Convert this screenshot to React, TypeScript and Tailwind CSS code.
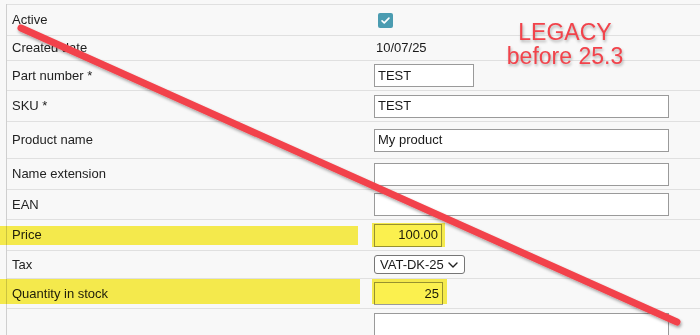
import type { ReactNode } from "react";

type Row = {
  label: string;
  height: string;
  value?: ReactNode;
};

function TextBox({ value = "", width = "w-[295px]", align = "text-left" }: { value?: string; width?: string; align?: string }) {
  return (
    <div
      className={`flex h-[23px] items-center border border-[#9a9a9a] bg-white px-[3px] text-[13px] text-[#1a1a1a] ${width} ${align === "text-right" ? "justify-end" : ""}`}
    >
      {value}
    </div>
  );
}

function Checkbox() {
  return (
    <div className="ml-1 flex h-[15px] w-[15px] items-center justify-center rounded-[2px] bg-[#4b9cb1]">
      <svg viewBox="0 0 16 16" className="h-[11px] w-[11px]">
        <path d="M3 8.5l3.2 3L13 4.5" fill="none" stroke="white" strokeWidth="2.4" strokeLinecap="round" strokeLinejoin="round" />
      </svg>
    </div>
  );
}

function Select({ value }: { value: string }) {
  return (
    <div className="flex h-[19px] w-[91px] items-center justify-between rounded-[3px] border border-[#767676] bg-white pl-[5px] pr-[6px] text-[13px] text-[#1a1a1a]">
      <span>{value}</span>
      <svg viewBox="0 0 10 6" className="h-[6px] w-[10px]">
        <path d="M1 1l4 4 4-4" fill="none" stroke="#222" strokeWidth="1.4" strokeLinecap="round" strokeLinejoin="round" />
      </svg>
    </div>
  );
}

const rows: Row[] = [
  { label: "Active", height: "h-[31px]", value: <Checkbox /> },
  { label: "Created date", height: "h-[25px]", value: <span className="ml-[2px] text-[13px] text-[#1a1a1a]">10/07/25</span> },
  { label: "Part number *", height: "h-[30px]", value: <TextBox value="TEST" width="w-[100px]" /> },
  { label: "SKU *", height: "h-[31px]", value: <TextBox value="TEST" /> },
  { label: "Product name", height: "h-[37px]", value: <TextBox value="My product" /> },
  { label: "Name extension", height: "h-[31px]", value: <TextBox /> },
  { label: "EAN", height: "h-[30px]", value: <TextBox /> },
  { label: "Price", height: "h-[31px]", value: <TextBox value="100.00" width="w-[68px]" align="text-right" /> },
  { label: "Tax", height: "h-[28px]", value: <Select value="VAT-DK-25" /> },
  { label: "Quantity in stock", height: "h-[30px]", value: <TextBox value="25" width="w-[69px]" align="text-right" /> },
];

export default function App() {
  return (
    <div className="relative h-[335px] w-[700px] overflow-hidden bg-[#f8f8f8] font-['Liberation_Sans',Arial,sans-serif]">
      <div className="ml-[6px] mt-[4px] border-l border-[#cfcfcf]">
        {rows.map((row) => (
          <div key={row.label} className={`flex items-center border-t border-[#e0e0e0] ${row.height}`}>
            <div className="w-[367px] pl-[5px] text-[13px] text-[#222]">{row.label}</div>
            <div className="flex items-center">{row.value}</div>
          </div>
        ))}
        <div className="flex h-[40px] items-start border-t border-[#e0e0e0] pt-[4px]">
          <div className="w-[367px]" />
          <div className="h-[40px] w-[295px] border border-[#9a9a9a] bg-white" />
        </div>
      </div>

      {/* highlighter marks */}
      <div className="pointer-events-none absolute left-0 top-[226px] h-[19px] w-[358px] bg-[#fbf04e] mix-blend-multiply" />
      <div className="pointer-events-none absolute left-[372px] top-[223px] h-[24px] w-[73px] bg-[#fbf04e] mix-blend-multiply" />
      <div className="pointer-events-none absolute left-0 top-[279px] h-[25px] w-[360px] bg-[#fbf04e] mix-blend-multiply" />
      <div className="pointer-events-none absolute left-[372px] top-[279px] h-[25px] w-[75px] bg-[#fbf04e] mix-blend-multiply" />

      {/* strike-through annotation */}
      <svg className="pointer-events-none absolute inset-0 h-[335px] w-[700px]" viewBox="0 0 700 335">
        <defs>
          <filter id="shadow" x="-10%" y="-10%" width="120%" height="130%">
            <feDropShadow dx="1" dy="2" stdDeviation="1.5" floodColor="#000" floodOpacity="0.35" />
          </filter>
        </defs>
        <line x1="21" y1="28" x2="677" y2="322" stroke="#f2434b" strokeWidth="7" strokeLinecap="round" filter="url(#shadow)" />
      </svg>

      <div className="pointer-events-none absolute left-[495px] top-[19px] flex w-[140px] flex-col items-center text-[23px] leading-[26px] text-[#f2434b] [text-shadow:1px_2px_3px_rgba(0,0,0,0.3)]">
        <div>LEGACY</div>
        <div className="-mt-[2px]">before 25.3</div>
      </div>
    </div>
  );
}
